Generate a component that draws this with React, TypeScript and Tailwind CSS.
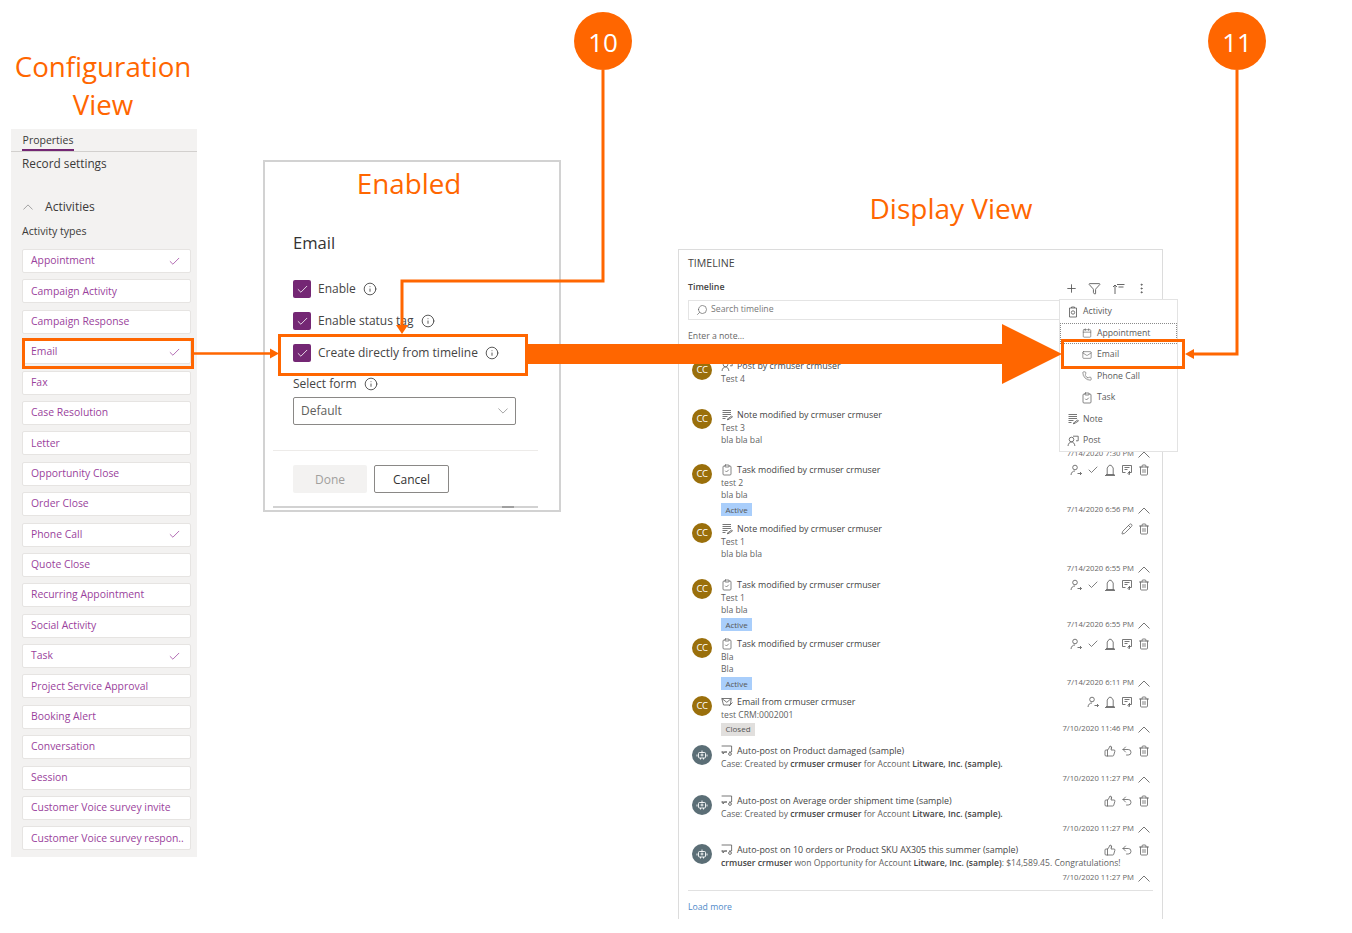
import React from "react";
import { Plus, Funnel, EllipsisVertical, Check, Info, Search, Mail, Phone, Trash2, Pencil, ThumbsUp, Undo2, Calendar, ClipboardCheck } from "lucide-react";

const types = [
  ["Appointment", true], ["Campaign Activity", false], ["Campaign Response", false], ["Email", true], ["Fax", false],
  ["Case Resolution", false], ["Letter", false], ["Opportunity Close", false], ["Order Close", false], ["Phone Call", true],
  ["Quote Close", false], ["Recurring Appointment", false], ["Social Activity", false], ["Task", true], ["Project Service Approval", false],
  ["Booking Alert", false], ["Conversation", false], ["Session", false], ["Customer Voice survey invite", false], ["Customer Voice survey respon..", false],
] as const;

const IC = "#5f5f5f";

function S({ children, size = 12 }: { children: React.ReactNode; size?: number }) {
  return (
    <svg width={size} height={size} viewBox="0 0 12 12" fill="none" stroke={IC} strokeWidth="0.85" className="shrink-0">
      {children}
    </svg>
  );
}
const Caret = ({ up = true, w = 12, color = "#666" }: { up?: boolean; w?: number; color?: string }) => (
  <svg width={w} height={w / 2 + 1} viewBox="0 0 12 7" fill="none" stroke={color} strokeWidth="0.9" className="shrink-0">
    <path d={up ? "M.5 6.5L6 1l5.5 5.5" : "M.5.5L6 6l5.5-5.5"} />
  </svg>
);
const NoteIcon = () => <S><path d="M1.5 1.5h8.5M1.5 3.5h8.5M1.5 5.5h8.5M1.5 7.5h5M1.5 9.5h3M6 10.5l4.5-3.5 1 1-4.5 2.8z" /></S>;
const PostIcon = () => <S><circle cx="4.5" cy="4.5" r="2.3" /><path d="M1 11c.3-2.6 1.7-4 3.5-4s3 1.2 3.4 4M6 1.2h5.2v4.6H9" /></S>;
const TaskIcon = () => <ClipboardCheck size={12} strokeWidth={1.5} color={IC} className="shrink-0" />;
const EmailIcon = () => <S><path d="M.8 2.5h9.5l-1 6.5H2.5zM.8 2.5l5 3.8 4.5-3.8M8 10l3.5-3.5" /></S>;
const AutoIcon = () => <S><path d="M.6 1h10v6H8M6 7H3.5L2 9V7H.6z" /><circle cx="9" cy="9" r="1.4" /></S>;
const ActivityIcon = () => <S><path d="M2.5 2h7v9h-7zM4.5 2V1h3v1" /><circle cx="6" cy="6.5" r="1.7" /></S>;
const AssignIcon = () => <S><circle cx="5" cy="3.5" r="2.3" /><path d="M1 11c.3-2.6 1.7-4 4-4M7.5 9.5h4M10 8l1.5 1.5L10 11" /></S>;
const QueueIcon = () => <S><path d="M2 10.5h8.5M3.2 10.5V4l2-2.7h2L9.2 4v6.5M1 11.5h10" /></S>;
const OpenIcon = () => <S><path d="M1.5 1.5h9v7H7M1.5 1.5v7H4.5M3.5 3.5h5M3.5 5.5h3M8.5 7v3.5l-2-1" /></S>;
const Trash = () => <Trash2 size={12} strokeWidth={1.6} color={IC} className="shrink-0" />;

function FullActions() {
  return (
    <div className="flex items-center gap-[5px]">
      <AssignIcon /><Check size={12} strokeWidth={1.6} color={IC} /><QueueIcon /><OpenIcon /><Trash />
    </div>
  );
}
function EmailActions() {
  return <div className="flex items-center gap-[5px]"><AssignIcon /><QueueIcon /><OpenIcon /><Trash /></div>;
}
function NoteActions() {
  return <div className="flex items-center gap-[5px]"><Pencil size={12} strokeWidth={1.6} color={IC} /><Trash /></div>;
}
function AutoActions() {
  return <div className="flex items-center gap-[5px]"><ThumbsUp size={12} strokeWidth={1.6} color={IC} /><Undo2 size={12} strokeWidth={1.6} color={IC} /><Trash /></div>;
}

const B = ({ children }: { children: React.ReactNode }) => <span className="font-semibold text-[#444]">{children}</span>;

type Row = {
  h: string; side: string; auto?: boolean; icon: React.ReactNode; title: string;
  lines: React.ReactNode[]; badge?: "Active" | "Closed"; date?: string; actions?: React.ReactNode;
};
const rows: Row[] = [
  { h: "h-[49px]", side: "h-[41px]", icon: <PostIcon />, title: "Post by crmuser crmuser", lines: ["Test 4"] },
  { h: "h-[55px]", side: "h-[52px]", icon: <NoteIcon />, title: "Note modified by crmuser crmuser", lines: ["Test 3", "bla bla bal"], date: "7/14/2020 7:30 PM" },
  { h: "h-[59px]", side: "h-[53px]", icon: <TaskIcon />, title: "Task modified by crmuser crmuser", lines: ["test 2", "bla bla"], badge: "Active", date: "7/14/2020 6:56 PM", actions: <FullActions /> },
  { h: "h-[56px]", side: "h-[53px]", icon: <NoteIcon />, title: "Note modified by crmuser crmuser", lines: ["Test 1", "bla bla bla"], date: "7/14/2020 6:55 PM", actions: <NoteActions /> },
  { h: "h-[59px]", side: "h-[53px]", icon: <TaskIcon />, title: "Task modified by crmuser crmuser", lines: ["Test 1", "bla bla"], badge: "Active", date: "7/14/2020 6:55 PM", actions: <FullActions /> },
  { h: "h-[58px]", side: "h-[52px]", icon: <TaskIcon />, title: "Task modified by crmuser crmuser", lines: ["Bla", "Bla"], badge: "Active", date: "7/14/2020 6:11 PM", actions: <FullActions /> },
  { h: "h-[49px]", side: "h-[40px]", icon: <EmailIcon />, title: "Email from crmuser crmuser", lines: ["test CRM:0002001"], badge: "Closed", date: "7/10/2020 11:46 PM", actions: <EmailActions /> },
  { h: "h-[50px]", side: "h-[41px]", auto: true, icon: <AutoIcon />, title: "Auto-post on Product damaged (sample)", lines: [<>Case: Created by <B>crmuser crmuser</B> for Account <B>Litware, Inc. (sample).</B></>], date: "7/10/2020 11:27 PM", actions: <AutoActions /> },
  { h: "h-[49px]", side: "h-[41px]", auto: true, icon: <AutoIcon />, title: "Auto-post on Average order shipment time (sample)", lines: [<>Case: Created by <B>crmuser crmuser</B> for Account <B>Litware, Inc. (sample).</B></>], date: "7/10/2020 11:27 PM", actions: <AutoActions /> },
  { h: "h-[42px]", side: "h-[41px]", auto: true, icon: <AutoIcon />, title: "Auto-post on 10 orders or Product SKU AX305 this summer (sample)", lines: [<><B>crmuser crmuser</B> won Opportunity for Account <B>Litware, Inc. (sample)</B>: $14,589.45. Congratulations!</>], date: "7/10/2020 11:27 PM", actions: <AutoActions /> },
];

function TimelineRow({ r }: { r: Row }) {
  return (
    <div className={`${r.h} flex`}>
      {r.auto ? (
        <div className="mt-[1px] mr-[9px] flex h-[20px] w-[20px] shrink-0 items-center justify-center rounded-full bg-[#5b6e76]">
          <svg width="12" height="12" viewBox="0 0 12 12" fill="none" stroke="#fff" strokeWidth="0.9">
            <rect x="2.5" y="3.5" width="7" height="5.5" rx="1" /><path d="M6 1.5v2M1 5.5v2M11 5.5v2M4.5 9v1.5M7.5 9v1.5" /><circle cx="6" cy="6" r="1" />
          </svg>
        </div>
      ) : (
        <div className="mt-[1px] mr-[9px] flex h-[20px] w-[20px] shrink-0 items-center justify-center rounded-full bg-[#9a6f0b] text-[9.5px] tracking-[-0.5px] text-white">CC</div>
      )}
      <div className="min-w-0 flex-1">
        <div className="-mt-[0.5px] flex h-[14px] items-center gap-[4px] text-[8.9px] font-medium whitespace-nowrap text-[#444]">
          {r.icon}<span>{r.title}</span>
        </div>
        {r.lines.map((l, i) => (
          <div key={i} className="h-[12.6px] text-[8.6px] leading-[12.6px] whitespace-nowrap text-[#5f5f5f]">{l}</div>
        ))}
        {r.badge && (
          <div className={`mt-[1.5px] flex h-[13px] items-center justify-center text-[8px] text-[#555] ${r.badge === "Active" ? "w-[31px] bg-[#a9cefb]" : "w-[34px] bg-[#e1dfdd]"}`}>{r.badge}</div>
        )}
      </div>
      <div className={`${r.side} flex w-[90px] shrink-0 flex-col items-end justify-between pr-[3px]`}>
        <div className="flex h-[14px] items-center">{r.actions}</div>
        {r.date && (
          <div className="flex h-[12px] items-center gap-[4px] text-[7.7px] whitespace-nowrap text-[#666]">
            <span>{r.date}</span><Caret />
          </div>
        )}
      </div>
    </div>
  );
}

function MenuRow({ icon, label, sub, focus }: { icon: React.ReactNode; label: string; sub?: boolean; focus?: boolean }) {
  return (
    <div className={`flex h-[21.5px] items-center gap-[5px] text-[8.7px] text-[#5a5a5a] ${focus ? "border border-dotted border-[#8a8a8a] pl-[21px]" : sub ? "pl-[22px]" : "pl-[8px]"}`}>
      <span className="flex w-[10px] justify-center">{icon}</span>
      <span>{label}</span>
    </div>
  );
}

function CheckRow({ label }: { label: string }) {
  return (
    <div className="flex h-[32px] items-center">
      <div className="flex h-[18px] w-[18px] items-center justify-center rounded-[2px] bg-[#742774]">
        <Check size={13} strokeWidth={1.5} color="#fff" />
      </div>
      <span className="ml-[7px] text-[12px] text-[#444]">{label}</span>
      <Info size={14} strokeWidth={1.5} color="#444" className="ml-[7px]" />
    </div>
  );
}

export default function App() {
  return (
    <div className="relative h-[933px] w-[1352px] overflow-hidden bg-white font-['Open_Sans',sans-serif]">
      {/* Titles */}
      <div className="absolute top-[47px] left-[3px] w-[200px] text-center text-[27.7px] leading-[38px] text-[#ff6600]">Configuration<br />View</div>
      <div className="absolute top-[189px] left-[851px] w-[200px] text-center text-[28px] leading-[38px] whitespace-nowrap text-[#ff6600]">Display View</div>

      {/* Configuration panel */}
      <div className="absolute top-[129px] left-[11px] flex h-[728px] w-[186px] flex-col bg-[#f3f2f1] text-[#3b3a39]">
        <div className="h-[23px] shrink-0 border-b border-[#d2d0ce] pl-[11px]">
          <div className="flex h-[22px] w-[52px] items-center justify-center border-b-2 border-[#742774] pt-[3px] text-[10.5px]">Properties</div>
        </div>
        <div className="flex h-[24px] shrink-0 items-center pl-[11px] text-[11.8px]">Record settings</div>
        <div className="mt-[19px] flex h-[24px] shrink-0 items-center pl-[12px] text-[12.1px]">
          <Caret w={10} color="#888" />
          <span className="ml-[12px]">Activities</span>
        </div>
        <div className="mt-[1px] flex h-[24px] shrink-0 items-center pl-[11px] text-[10.6px] font-medium">Activity types</div>
        <div className="mt-[5px] ml-[11px] flex w-[169px] flex-col gap-[6.4px]">
          {types.map(([t, on]) => (
            <div key={t} className="flex h-[24px] items-center justify-between rounded-[2px] border border-[#e6e4e2] bg-white pr-[9px] pl-[8px] text-[10.4px] font-medium whitespace-nowrap text-[#9a3f9c]">
              <span>{t}</span>
              {on && <Check size={13} strokeWidth={1.4} color="#9a3f9c" />}
            </div>
          ))}
        </div>
      </div>

      {/* Email dialog */}
      <div className="absolute top-[160px] left-[263px] flex h-[352px] w-[298px] flex-col border-2 border-[#d2d2d2] bg-white text-[#444]">
        <div className="flex h-[44px] shrink-0 items-center justify-center pr-[6px] text-[27.8px] text-[#ff6600]">Enabled</div>
        <div className="flex flex-col pl-[28px]">
          <div className="mt-[17px] flex h-[40px] shrink-0 items-center text-[16.6px] text-[#333]">Email</div>
          <div className="mt-[10px]">
            <CheckRow label="Enable" />
            <CheckRow label="Enable status tag" />
            <CheckRow label="Create directly from timeline" />
          </div>
          <div className="mt-[2px] flex h-[26px] items-center text-[12px]">
            Select form
            <Info size={14} strokeWidth={1.5} color="#444" className="ml-[7px]" />
          </div>
          <div className="flex h-[28px] w-[223px] items-center justify-between rounded-[2px] border border-[#8a8886] px-[7px] text-[12px] text-[#605e5c]">
            Default
            <Caret up={false} w={10} color="#888" />
          </div>
        </div>
        <div className="mt-[25px] ml-[8px] w-[265px] border-t border-[#edebe9]" />
        <div className="mt-[14px] ml-[28px] flex gap-[7px] text-[12px]">
          <div className="flex h-[28px] w-[74px] items-center justify-center rounded-[2px] bg-[#f3f2f1] pt-[1px] text-[#a19f9d]">Done</div>
          <div className="flex h-[28px] w-[75px] items-center justify-center rounded-[2px] border border-[#8a8886] pt-[1px] text-[#333]">Cancel</div>
        </div>
        <div className="mt-[13px] ml-[8px] flex h-[2px] w-[265px] justify-end bg-[#d2d2d2] pr-[24px]"><div className="h-[2px] w-[12px] bg-[#a0a0a0]" /></div>
      </div>

      {/* Timeline */}
      <div className="absolute top-[249px] left-[678px] h-[670px] w-[485px] overflow-hidden border-x border-t border-[#dcdcdc] bg-white pl-[9px]">
        <div className="flex h-[28px] items-center text-[10.6px] text-[#444]">TIMELINE</div>
        <div className="flex h-[20px] items-center justify-between pr-[14px]">
          <span className="text-[8.8px] font-semibold text-[#444]">Timeline</span>
          <div className="flex items-center gap-[10.3px]">
            <Plus size={13} strokeWidth={1.6} color="#555" />
            <Funnel size={13} strokeWidth={1.6} color="#555" />
            <svg width="13" height="13" viewBox="0 0 13 13" fill="none" stroke="#555" strokeWidth="0.9"><path d="M5 2.5h7.5M6.5 5h5M3 12V3M1 5l2-2 2 2" /></svg>
            <EllipsisVertical size={13} strokeWidth={1.6} color="#555" />
          </div>
        </div>
        <div className="mt-[2px] mr-[9px] flex h-[20px] items-center gap-[3px] border border-[#e4e4e4] pl-[7px] text-[8.7px] text-[#777]">
          <Search size={12} strokeWidth={1.4} color="#666" className="-scale-x-100" />
          Search timeline
        </div>
        <div className="flex h-[33px] items-center text-[8.7px] text-[#666]">Enter a note...</div>
        <div className="mt-[6px] mr-[9px] pl-[4px]">
          {rows.map((r, i) => <TimelineRow key={i} r={r} />)}
        </div>
        <div className="mt-[5px] mr-[9px] border-t border-[#e1e1e1]" />
        <div className="flex h-[34px] items-center text-[8.7px] text-[#4f8ac9]">Load more</div>
      </div>

      {/* Add menu */}
      <div className="absolute top-[299px] left-[1059px] h-[153px] w-[119px] border border-[#e3e3e3] bg-white pt-[1px]">
        <MenuRow icon={<ActivityIcon />} label="Activity" />
        <MenuRow sub focus icon={<Calendar size={12} strokeWidth={1.5} color={IC} />} label="Appointment" />
        <MenuRow sub icon={<Mail size={12} strokeWidth={1.5} color={IC} />} label="Email" />
        <MenuRow sub icon={<Phone size={12} strokeWidth={1.5} color={IC} />} label="Phone Call" />
        <MenuRow sub icon={<TaskIcon />} label="Task" />
        <MenuRow icon={<NoteIcon />} label="Note" />
        <MenuRow icon={<PostIcon />} label="Post" />
      </div>

      {/* Highlight boxes */}
      <div className="absolute top-[338px] left-[22px] h-[31px] w-[172px] border-[3px] border-[#ff6600]" />
      <div className="absolute top-[334px] left-[278px] h-[42px] w-[250px] border-[3px] border-[#ff6600]" />
      <div className="absolute top-[339px] left-[1061px] h-[30px] w-[124px] border-[3px] border-[#ff6600]" />

      {/* Callout arrows */}
      <svg className="absolute top-0 left-0" width="1352" height="933" fill="none">
        <path d="M603 70V281H402V326" stroke="#ff6600" strokeWidth="3" />
        <path d="M396 325h12l-6 9z" fill="#ff6600" />
        <path d="M1237 70V354H1193" stroke="#ff6600" strokeWidth="3" />
        <path d="M1185 354l9-5v10z" fill="#ff6600" />
        <path d="M194 353.5H271" stroke="#ff6600" strokeWidth="2.5" />
        <path d="M279 353.5l-9-5v10z" fill="#ff6600" />
        <path d="M527 344H1002V324L1062 354L1002 384V364H527z" fill="#ff6600" />
      </svg>

      {/* Callout numbers */}
      <div className="absolute top-[12px] left-[574px] flex h-[58px] w-[58px] items-center justify-center rounded-full bg-[#ff6600] pt-[3px] text-[26px] text-white">10</div>
      <div className="absolute top-[12px] left-[1208px] flex h-[58px] w-[58px] items-center justify-center rounded-full bg-[#ff6600] pt-[3px] text-[26px] text-white">11</div>
    </div>
  );
}
